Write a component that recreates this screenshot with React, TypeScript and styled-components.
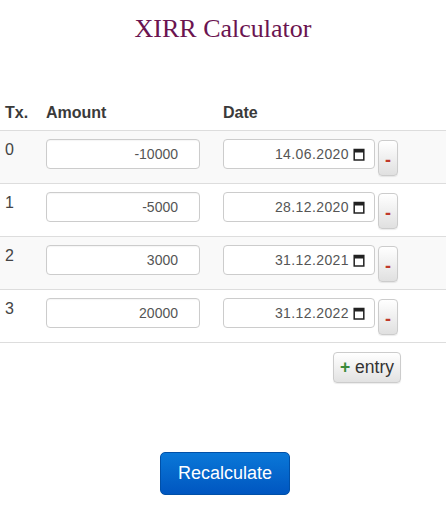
import React from 'react'
import styled, { createGlobalStyle } from 'styled-components'

const GlobalStyle = createGlobalStyle`
  body {
    margin: 0;
    background: #fff;
    font-family: "Liberation Sans", Arial, sans-serif;
    color: #333;
  }
`

interface Entry {
  amount: string
  date: string
}

const entries: Entry[] = [
  { amount: '-10000', date: '14.06.2020' },
  { amount: '-5000', date: '28.12.2020' },
  { amount: '3000', date: '31.12.2021' },
  { amount: '20000', date: '31.12.2022' },
]

const Page = styled.div`
  width: 446px;
`

const Title = styled.h1`
  margin: 0;
  padding-top: 12px;
  text-align: center;
  font-family: "Liberation Serif", "Times New Roman", serif;
  font-weight: normal;
  font-size: 26px;
  line-height: 34px;
  color: #6b1450;
`

const Table = styled.div`
  margin-top: 54px;
`

const HeadRow = styled.div`
  display: grid;
  grid-template-columns: 41px 177px 1fr;
  border-bottom: 1px solid #ddd;
  padding: 2px 0 6px;
`

const HeadCell = styled.div`
  padding-left: 5px;
  font-size: 16px;
  font-weight: bold;
  line-height: 22px;
  color: #3a3a3a;
`

const Row = styled.div<{ $striped: boolean }>`
  display: grid;
  grid-template-columns: 41px 177px 1fr;
  height: 52px;
  border-bottom: 1px solid #ddd;
  background: ${p => (p.$striped ? '#f9f9f9' : '#fff')};
`

const IndexCell = styled.div`
  padding: 8px 0 0 5px;
  font-size: 16px;
  line-height: 22px;
  color: #444;
`

const Cell = styled.div`
  padding: 8px 0 0 5px;
  display: flex;
  align-items: flex-start;
  gap: 3px;
`

const AmountInput = styled.input`
  box-sizing: border-box;
  width: 154px;
  height: 30px;
  margin: 0;
  padding: 0 21px 0 8px;
  border: 1px solid #ccc;
  border-radius: 4px;
  background: #fff;
  text-align: right;
  font-family: "Liberation Sans", Arial, sans-serif;
  font-size: 14px;
  color: #555;
  box-shadow: inset 0 1px 1px rgba(0, 0, 0, 0.04);
`

const DateField = styled.div`
  box-sizing: border-box;
  width: 152px;
  height: 30px;
  padding: 0 9px 0 8px;
  display: flex;
  align-items: center;
  justify-content: flex-end;
  gap: 4px;
  border: 1px solid #ccc;
  border-radius: 4px;
  background: #fff;
  font-size: 14px;
  letter-spacing: 0.4px;
  color: #555;
`

const RemoveButton = styled.button`
  box-sizing: border-box;
  width: 20px;
  height: 36px;
  margin-top: 1px;
  padding: 0 0 4px;
  display: flex;
  align-items: flex-end;
  justify-content: center;
  border: 1px solid #ccc;
  border-radius: 4px;
  background: linear-gradient(#fff, #e0e0e0);
  box-shadow: 0 1px 1px rgba(0, 0, 0, 0.08);
  color: #c0392b;
  font-family: "Liberation Sans", Arial, sans-serif;
  font-size: 18px;
  font-weight: bold;
  line-height: 22px;
`

const Actions = styled.div`
  display: flex;
  justify-content: flex-end;
  padding: 9px 45px 0 0;
`

const EntryButton = styled.button`
  box-sizing: border-box;
  height: 31px;
  padding: 0 6px;
  border: 1px solid #ccc;
  border-radius: 4px;
  background: linear-gradient(#fff, #e2e2e2);
  box-shadow: 0 1px 1px rgba(0, 0, 0, 0.08);
  font-family: "Liberation Sans", Arial, sans-serif;
  font-size: 17.5px;
  color: #333;
`

const Plus = styled.span`
  color: #3a8a3a;
  font-weight: bold;
`

const Footer = styled.div`
  display: flex;
  justify-content: center;
  padding: 69px 0 0 4px;
`

const PrimaryButton = styled.button`
  box-sizing: border-box;
  width: 130px;
  height: 43px;
  border: 1px solid #0050a8;
  border-radius: 5px;
  background: linear-gradient(#0a78d8, #0056c0);
  color: #fff;
  font-family: "Liberation Sans", Arial, sans-serif;
  font-size: 18px;
`

const CalendarIcon = () => (
  <svg width="12" height="13" viewBox="0 0 12 13" fill="none">
    <rect x="1.2" y="1.5" width="9.6" height="10.5" stroke="#222" strokeWidth="1.5" />
    <rect x="1" y="1.5" width="10" height="3" fill="#222" />
  </svg>
)

export default function App() {
  return (
    <Page>
      <GlobalStyle />
      <Title>XIRR Calculator</Title>
      <Table>
        <HeadRow>
          <HeadCell>Tx.</HeadCell>
          <HeadCell>Amount</HeadCell>
          <HeadCell>Date</HeadCell>
        </HeadRow>
        {entries.map((e, i) => (
          <Row key={i} $striped={i % 2 === 0}>
            <IndexCell>{i}</IndexCell>
            <Cell>
              <AmountInput type="text" defaultValue={e.amount} />
            </Cell>
            <Cell>
              <DateField>
                <span>{e.date}</span>
                <CalendarIcon />
              </DateField>
              <RemoveButton>-</RemoveButton>
            </Cell>
          </Row>
        ))}
      </Table>
      <Actions>
        <EntryButton>
          <Plus>+</Plus> entry
        </EntryButton>
      </Actions>
      <Footer>
        <PrimaryButton>Recalculate</PrimaryButton>
      </Footer>
    </Page>
  )
}
